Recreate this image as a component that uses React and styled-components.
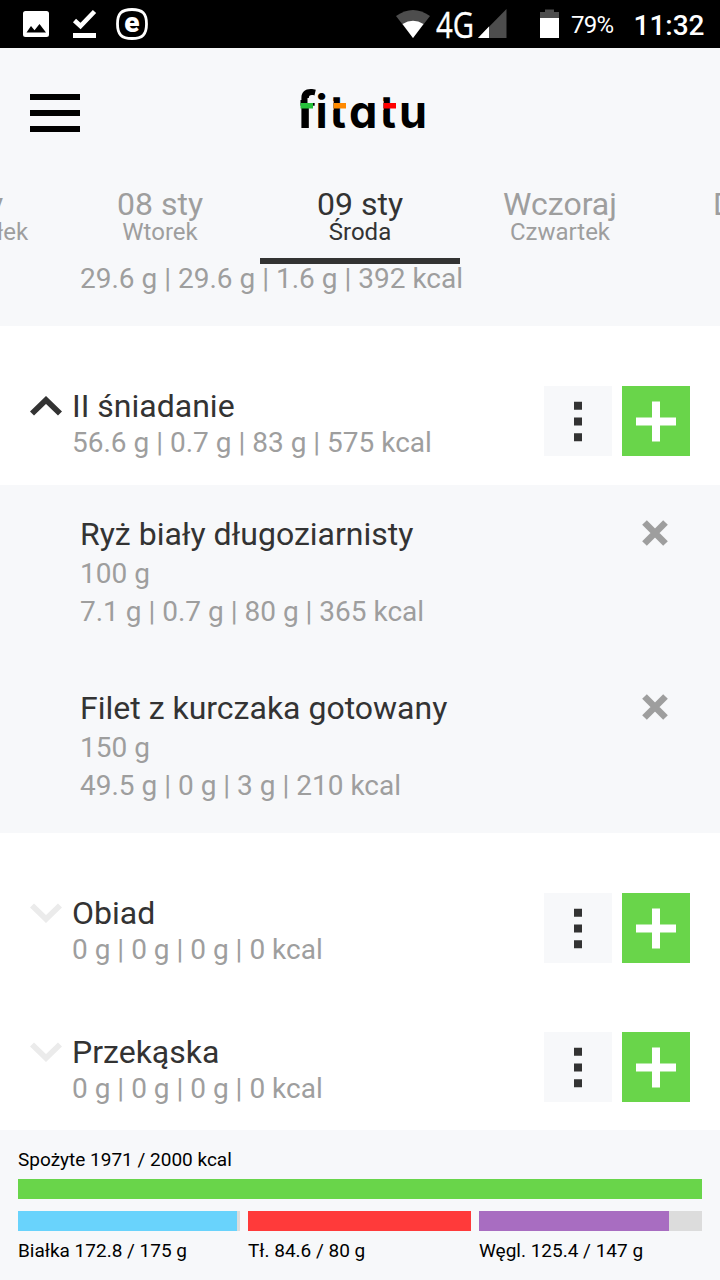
import React from 'react';
import styled, { createGlobalStyle } from 'styled-components';

const GlobalStyle = createGlobalStyle`
  *, *::before, *::after { box-sizing: border-box; }
  body { margin: 0; background: #fff; font-family: Roboto, "Liberation Sans", sans-serif; }
`;

const Screen = styled.div`
  display: flex;
  flex-direction: column;
  width: 720px;
  height: 1280px;
  overflow: hidden;
  background: #fff;
`;

const StatusBar = styled.div`
  display: flex;
  justify-content: space-between;
  flex: none;
  height: 48px;
  background: #000;
  color: #fff;
`;

const StatusIcon = styled.svg`
  display: block;
  flex: none;
`;

const Header = styled.header`
  display: grid;
  grid-template-columns: 270px 1fr 270px;
  flex: none;
  height: 132px;
  padding-top: 32px;
  background: #f7f8fa;
`;

const MenuButton = styled.button`
  display: flex;
  flex-direction: column;
  gap: 10px;
  width: 50px;
  height: 38px;
  margin: 14px 0 0 30px;
  padding: 0;
  border: 0;
  background: none;
`;

const MenuLine = styled.span`
  height: 6px;
  background: #000;
`;

const Logo = styled.svg`
  display: block;
  justify-self: center;
  font: 700 45px Inter, sans-serif;
  font-feature-settings: "cv11", "ss03";
`;

const Tabs = styled.nav`
  display: flex;
  flex: none;
  height: 84px;
  background: #f7f8fa;
  overflow: hidden;
`;

const TabTrack = styled.div`
  display: flex;
  flex: none;
  margin-left: -140px;
`;

const Tab = styled.div`
  display: flex;
  flex-direction: column;
  align-items: center;
  flex: none;
  width: 200px;
  padding-top: 9px;
  border-bottom: 6px solid ${(p) => (p.$active ? '#333' : 'transparent')};
  color: ${(p) => (p.$active ? '#333' : '#9e9e9e')};
`;

const TabDate = styled.span`
  font-size: 32px;
  line-height: 30px;
`;

const TabDay = styled.span`
  font-size: 24px;
  line-height: 26px;
`;

const Diary = styled.main`
  flex: 1;
  min-height: 0;
  overflow: hidden;
`;

const PreviousMeal = styled.div`
  height: 62px;
  padding: 0 0 0 80px;
  background: #f7f8fa;
`;

const Macros = styled.div`
  color: #9e9e9e;
  font-size: 28px;
  line-height: ${(p) => p.$line || 38}px;
  white-space: nowrap;
`;

const MealRow = styled.section`
  display: flex;
  align-items: flex-start;
  height: ${(p) => (p.$open ? 159 : 139)}px;
  padding: 60px 30px 0;
`;

const Chevron = styled.svg`
  flex: none;
  width: 32px;
  height: 20px;
  margin: 10px 10px 0 0;
`;

const MealInfo = styled.div`
  flex: 1;
`;

const Title = styled.div`
  color: #333;
  font-size: 32px;
  line-height: ${(p) => p.$line || 38}px;
  white-space: nowrap;
`;

const Actions = styled.div`
  display: flex;
  gap: 10px;
`;

const ActionButton = styled.button`
  display: block;
  width: 68px;
  height: 70px;
  padding: 0;
  border: 0;
  background: ${(p) => (p.$primary ? '#69d54a' : '#f7f8fa')};
`;

const Products = styled.div`
  background: #f7f8fa;
`;

const Product = styled.article`
  display: flex;
  justify-content: space-between;
  height: 174px;
  padding: 30px 51px 0 80px;
`;

const ProductName = styled(Title)`
  margin-bottom: 2px;
`;

const RemoveIcon = styled.svg`
  width: 28px;
  height: 28px;
  margin-top: 4px;
`;

const Summary = styled.footer`
  display: flex;
  flex-direction: column;
  flex: none;
  height: 150px;
  padding: 19px 18px 0;
  background: #f7f8fa;
`;

const SummaryLabel = styled.div`
  font-size: 19px;
  line-height: 22px;
  color: #000;
  white-space: nowrap;
`;

const Track = styled.div`
  height: 20px;
  background: #dcdcdc;
`;

const Fill = styled.div`
  height: 100%;
  background: ${(p) => p.$color};
`;

const Total = styled.div`
  display: flex;
  flex-direction: column;
  gap: 8px;
`;

const Nutrients = styled.div`
  display: grid;
  grid-template-columns: 222px 223px 223px;
  gap: 8px;
  margin-top: 12px;
`;

const Nutrient = styled.div`
  display: flex;
  flex-direction: column;
  gap: 9px;
`;

const days = [
  ['07 sty', 'Poniedziałek'],
  ['08 sty', 'Wtorek'],
  ['09 sty', 'Środa'],
  ['Wczoraj', 'Czwartek'],
  ['Dzisiaj', 'Piątek'],
];

const products = [
  ['Ryż biały długoziarnisty', '100 g', '7.1 g | 0.7 g | 80 g | 365 kcal'],
  ['Filet z kurczaka gotowany', '150 g', '49.5 g | 0 g | 3 g | 210 kcal'],
];

const nutrients = [
  { label: 'Białka 172.8 / 175 g', color: '#69d3fc', value: 172.8, goal: 175 },
  { label: 'Tł. 84.6 / 80 g', color: '#ff3a3a', value: 84.6, goal: 80 },
  { label: 'Węgl. 125.4 / 147 g', color: '#a86dc1', value: 125.4, goal: 147 },
];

function Notifications() {
  return (
    <StatusIcon width="160" height="48" viewBox="0 0 160 48">
      <path
        fill="#fff"
        fillRule="evenodd"
        d="M25.500 11H46.500Q49 11 49 13.500V34.500Q49 37 46.500 37H25.500Q23 37 23 34.500V13.500Q23 11 25.500 11ZM26.500 32.500H46L39.500 24L34.500 30.300L31 26Z"
      />
      <path d="M74.500 20.500L80.500 26L94.500 11.500" fill="none" stroke="#fff" strokeWidth="4.600" />
      <path fill="#fff" d="M73 33H96V38H73Z" />
      <path
        d="M132 9.500C142.500 9.500 146.500 13.500 146.500 24S142.500 38.500 132 38.500S117.500 34.500 117.500 24S121.500 9.500 132 9.500Z"
        fill="none"
        stroke="#fff"
        strokeWidth="2.800"
      />
      <text
        x="132" y="31.500" textAnchor="middle" fill="#fff"
        fontSize="28" fontWeight="900" fontFamily="Roboto, sans-serif"
      >
        e
      </text>
    </StatusIcon>
  );
}

function SystemStatus() {
  return (
    <StatusIcon width="340" height="48" viewBox="380 0 340 48">
      <path fill="#4d4d4d" d="M396 16Q413 4 430 16L413 38Z" />
      <path fill="#fff" d="M402.500 24Q413 17.500 423.500 24L413 38Z" />
      <text
        x="436" y="37.500" fill="#fff" stroke="#fff" strokeWidth="0.400"
        fontSize="36" fontFamily="Open Sans, sans-serif" textLength="38" lengthAdjust="spacingAndGlyphs"
      >
        4G
      </text>
      <path fill="#4d4d4d" d="M506.500 9V38H478Z" />
      <path fill="#fff" d="M489 26.500V38H478Z" />
      <path fill="#4d4d4d" d="M540 18V12H545V9.500H554V12H559V18Z" />
      <path fill="#fff" d="M540 18H559V38H540Z" />
      <text x="571" y="33" fill="#fff" fontSize="24" fontFamily="Roboto, sans-serif" textLength="43">79%</text>
      <text x="633.500" y="35" fill="#fff" fontSize="28" fontWeight="500" fontFamily="Roboto, sans-serif" textLength="71">11:32</text>
    </StatusIcon>
  );
}

function FitatuLogo() {
  return (
    <Logo width="160" height="60" viewBox="280 80 160 60" role="img" aria-label="fitatu">
      <text y="127.500" x="296 315.500 329.500 349 379.500 399"><tspan fontSize="51">f</tspan>itatu</text>
      {/* trims the crossbars to the stem edge */}
      <path fill="#f7f8fa" d="M294 98H300.500V110H294ZM307.500 98H316V103H307.500ZM327 101H333.500V110H327ZM377 101H383.500V110H377Z" />
      <path fill="#27c13b" d="M300.500 103H313V108.500H300.500Z" />
      <path fill="#ff8a00" d="M333.500 103H346V108.500H333.500Z" />
      <path fill="#ff0000" d="M383.500 103H396V108.500H383.500Z" />
    </Logo>
  );
}

function Meal({ name, macros, open }) {
  return (
    <MealRow $open={open}>
      <Chevron viewBox="0 0 32 20">
        <path
          d={open ? 'M2 17.500L16 4L30 17.500' : 'M2 2.500L16 16L30 2.500'}
          fill="none"
          stroke={open ? '#333' : '#ebebeb'}
          strokeWidth="5.800"
        />
      </Chevron>
      <MealInfo>
        <Title $line={40}>{name}</Title>
        <Macros $line={33}>{macros}</Macros>
      </MealInfo>
      <Actions>
        <ActionButton aria-label="Więcej">
          <svg width="68" height="70" viewBox="0 0 68 70">
            <path fill="#333" d="M30 15.700H38V23.700H30ZM30 31.400H38V39.400H30ZM30 47.300H38V55.300H30Z" />
          </svg>
        </ActionButton>
        <ActionButton $primary aria-label="Dodaj">
          <svg width="68" height="70" viewBox="0 0 68 70">
            <path fill="#fff" d="M30 15.600H38V31.400H54V39.600H38V55.600H30V39.600H14V31.400H30Z" />
          </svg>
        </ActionButton>
      </Actions>
    </MealRow>
  );
}

export default function App() {
  return (
    <>
      <GlobalStyle />
      <Screen>
        <StatusBar>
          <Notifications />
          <SystemStatus />
        </StatusBar>
        <Header>
          <MenuButton aria-label="Menu">
            <MenuLine />
            <MenuLine />
            <MenuLine />
          </MenuButton>
          <FitatuLogo />
        </Header>
        <Tabs>
          <TabTrack>
            {days.map(([date, day], i) => (
              <Tab key={date} $active={i === 2}>
                <TabDate>{date}</TabDate>
                <TabDay>{day}</TabDay>
              </Tab>
            ))}
          </TabTrack>
        </Tabs>
        <Diary>
          <PreviousMeal>
            <Macros $line={30}>29.6 g | 29.6 g | 1.6 g | 392 kcal</Macros>
          </PreviousMeal>
          <Meal name="II śniadanie" macros="56.6 g | 0.7 g | 83 g | 575 kcal" open />
          <Products>
            {products.map(([name, amount, macros]) => (
              <Product key={name}>
                <div>
                  <ProductName>{name}</ProductName>
                  <Macros>{amount}</Macros>
                  <Macros>{macros}</Macros>
                </div>
                <RemoveIcon viewBox="0 0 28 28">
                  <path d="M3.500 3.500L24.500 24.500M24.500 3.500L3.500 24.500" stroke="#9e9e9e" strokeWidth="6.600" />
                </RemoveIcon>
              </Product>
            ))}
          </Products>
          <Meal name="Obiad" macros="0 g | 0 g | 0 g | 0 kcal" />
          <Meal name="Przekąska" macros="0 g | 0 g | 0 g | 0 kcal" />
        </Diary>
        <Summary>
          <Total>
            <SummaryLabel>Spożyte 1971 / 2000 kcal</SummaryLabel>
            <Track>
              <Fill $color="#69d54a" />
            </Track>
          </Total>
          <Nutrients>
            {nutrients.map(({ label, color, value, goal }) => (
              <Nutrient key={label}>
                <Track>
                  <Fill $color={color} style={{ width: `${Math.min(100, (value / goal) * 100)}%` }} />
                </Track>
                <SummaryLabel>{label}</SummaryLabel>
              </Nutrient>
            ))}
          </Nutrients>
        </Summary>
      </Screen>
    </>
  );
}
